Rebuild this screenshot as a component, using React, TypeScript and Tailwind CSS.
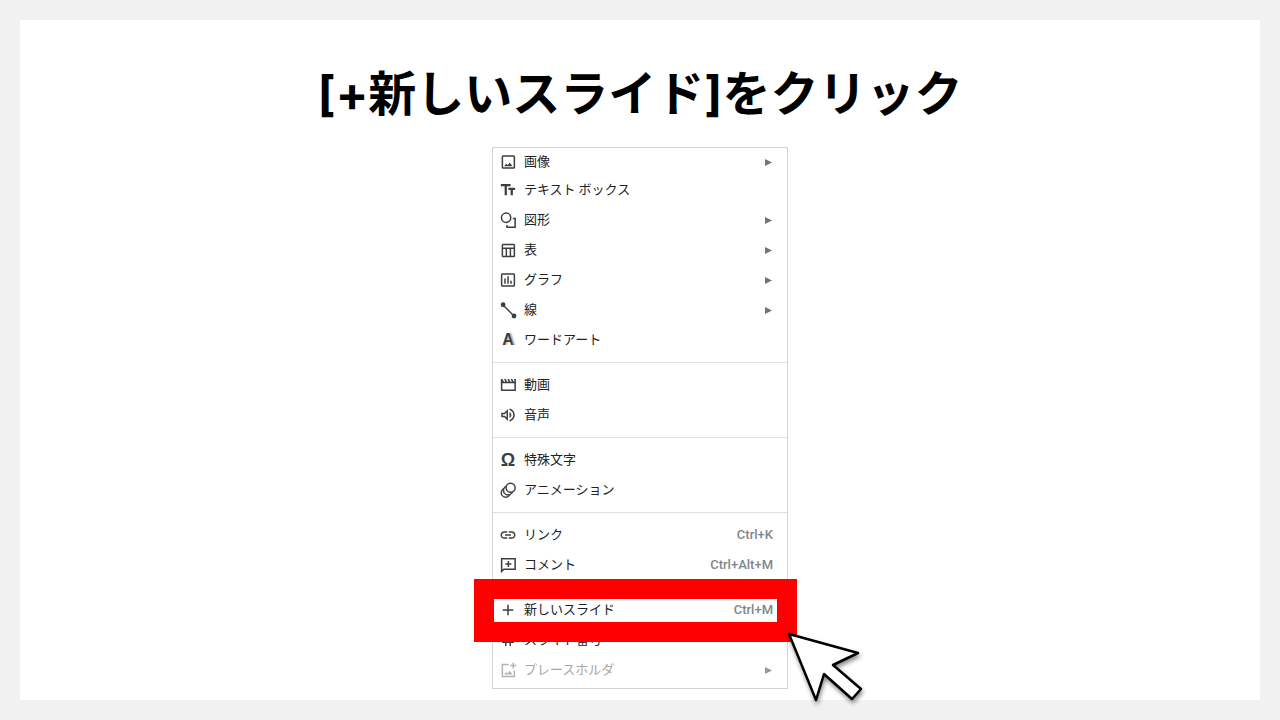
import type { ReactNode } from 'react';
import { MdAdd, MdInsertChartOutlined, MdLink, MdOutlineVolumeUp, MdTag, MdTextFields } from 'react-icons/md';

type Item = {
  label: string;
  icon: ReactNode;
  shortcut?: string;
  submenu?: boolean;
  disabled?: boolean;
  highlighted?: boolean;
};

function Svg({ children }: { children: ReactNode }) {
  return (
    <svg viewBox="0 0 24 24" className="w-[18px] h-[18px]" fill="none" stroke="currentColor" strokeWidth="2">
      {children}
    </svg>
  );
}

const ImageIcon = () => (
  <Svg>
    <rect x="4.5" y="4" width="16" height="16" rx="1" />
    <path d="M7 17.5l2.6-3.4 2 2.1 2.7-3.7 3.7 5z" fill="currentColor" stroke="none" />
  </Svg>
);

const ShapeIcon = () => (
  <Svg>
    <circle cx="9.5" cy="9" r="6.2" />
    <path d="M18.5 10H21.5V21.5H10.5V18.5" />
  </Svg>
);

const TableIcon = () => (
  <Svg>
    <rect x="4.5" y="4.5" width="16" height="16" rx="1" />
    <path d="M4.5 9.5H20.5M9.8 9.5V20.5M15.2 9.5V20.5" />
  </Svg>
);

const LineIcon = () => (
  <Svg>
    <path d="M5 5L20 20" />
    <circle cx="5.5" cy="5" r="3.2" fill="currentColor" stroke="none" />
    <circle cx="20" cy="20" r="3.2" fill="currentColor" stroke="none" />
  </Svg>
);

const VideoIcon = () => (
  <Svg>
    <path d="M3.5 7V19H21.5V7" />
    <path
      d="M2.5 4h2l2 3.5h2L6.7 4h2.2l2 3.5h2L11.1 4h2.2l2 3.5h2L15.500 4h2.2l2 3.5h1.300L19.800 4H22.500v5.500h-20z"
      fill="currentColor"
      stroke="none"
    />
  </Svg>
);

const AnimationIcon = () => (
  <Svg>
    <circle cx="9" cy="15.5" r="6" />
    <circle cx="12" cy="12.500" r="6" fill="#fff" />
    <circle cx="15.500" cy="9" r="6" fill="#fff" />
  </Svg>
);

const CommentIcon = () => (
  <Svg>
    <path d="M3.5 3.5H21.5V17.5H6.5L3.5 20.5Z" />
    <path d="M12.5 6.5V14.5M8.5 10.5H16.5" />
  </Svg>
);

const PlaceholderIcon = () => (
  <Svg>
    <path d="M13 4.5H4.5V20.5H20.5V12.5" />
    <path d="M7 18l2.6-3.4 2 2.1 2.7-3.7 3.7 5z" fill="currentColor" stroke="none" />
    <path d="M19 2v8M15 6h8" />
  </Svg>
);

const groups: Item[][] = [
  [
    { label: '画像', icon: <ImageIcon />, submenu: true },
    { label: 'テキスト ボックス', icon: <MdTextFields size={18} /> },
    { label: '図形', icon: <ShapeIcon />, submenu: true },
    { label: '表', icon: <TableIcon />, submenu: true },
    { label: 'グラフ', icon: <MdInsertChartOutlined size={18} />, submenu: true },
    { label: '線', icon: <LineIcon />, submenu: true },
    { label: 'ワードアート', icon: <span className="text-base font-bold [text-shadow:2px_0_0_#c8c8c8]">A</span> },
  ],
  [
    { label: '動画', icon: <VideoIcon /> },
    { label: '音声', icon: <MdOutlineVolumeUp size={18} /> },
  ],
  [
    { label: '特殊文字', icon: <span className="text-lg font-bold">Ω</span> },
    { label: 'アニメーション', icon: <AnimationIcon /> },
  ],
  [
    { label: 'リンク', icon: <MdLink size={18} />, shortcut: 'Ctrl+K' },
    { label: 'コメント', icon: <CommentIcon />, shortcut: 'Ctrl+Alt+M' },
  ],
  [
    { label: '新しいスライド', icon: <MdAdd size={18} />, shortcut: 'Ctrl+M', highlighted: true },
    { label: 'スライド番号', icon: <MdTag size={18} /> },
    { label: 'プレースホルダ', icon: <PlaceholderIcon />, submenu: true, disabled: true },
  ],
];

function Highlight() {
  return (
    <div className="absolute z-10 -top-4 -bottom-[17px] -left-[19px] -right-[10px] border-[20px] border-[#ff0000] pointer-events-none">
      <svg
        viewBox="0 0 80 80"
        className="absolute left-[290px] top-[30px] w-20 h-20 drop-shadow-[1px_3px_2px_rgba(0,0,0,0.45)]"
      >
        <path
          d="M5 5L74 24L49 36L77 60L68 70L40 45L32 71Z"
          fill="#fff"
          stroke="#000"
          strokeWidth="2.5"
          strokeLinejoin="round"
        />
      </svg>
    </div>
  );
}

function MenuItem({ item, first }: { item: Item; first: boolean }) {
  return (
    <li className="relative">
      <button
        type="button"
        disabled={item.disabled}
        className={`flex items-center w-full pl-[6px] pr-[14px] text-[13px] text-left ${first ? 'h-[27px]' : 'h-[30px]'} ${
          item.disabled ? 'text-[#a6a6a6]' : 'text-[#202124]'
        }`}
      >
        <span
          className={`flex items-center justify-center w-[18px] h-[18px] mr-[7px] font-['Liberation_Sans',sans-serif] ${
            item.disabled ? 'text-[#b4b4b4]' : 'text-[#3c3f3e]'
          }`}
        >
          {item.icon}
        </span>
        <span className="flex-1 pb-0.5">{item.label}</span>
        {item.shortcut && (
          <span className="font-[Roboto,sans-serif] font-medium text-[#80868b]">{item.shortcut}</span>
        )}
        {item.submenu && (
          <svg viewBox="0 0 8 8" className={`w-2 h-2 ${item.disabled ? 'fill-[#999999]' : 'fill-[#737373]'}`}>
            <path d="M0 1L7 4.5L0 8Z" />
          </svg>
        )}
      </button>
      {item.highlighted && <Highlight />}
    </li>
  );
}

export default function App() {
  return (
    <div className="flex min-h-screen p-5 bg-[#f1f1f1] font-['Noto_Sans_CJK_JP',sans-serif]">
      <main className="flex flex-col items-center flex-1 pt-11 pb-[11px] bg-white">
        <h1 className="mb-[23px] text-5xl leading-[60px] font-bold text-black font-[Inter,'Noto_Sans_CJK_JP',sans-serif]">
          [+新しいスライド]をクリック
        </h1>
        <nav className="w-[296px] pb-[3px] border border-[#d4d4d4]">
          {groups.map((group, g) => (
            <ul key={g}>
              {g > 0 && <li role="separator" className="h-px my-[7px] bg-[#e0e0e0]" />}
              {group.map((item, i) => (
                <MenuItem key={item.label} item={item} first={g === 0 && i === 0} />
              ))}
            </ul>
          ))}
        </nav>
      </main>
    </div>
  );
}
